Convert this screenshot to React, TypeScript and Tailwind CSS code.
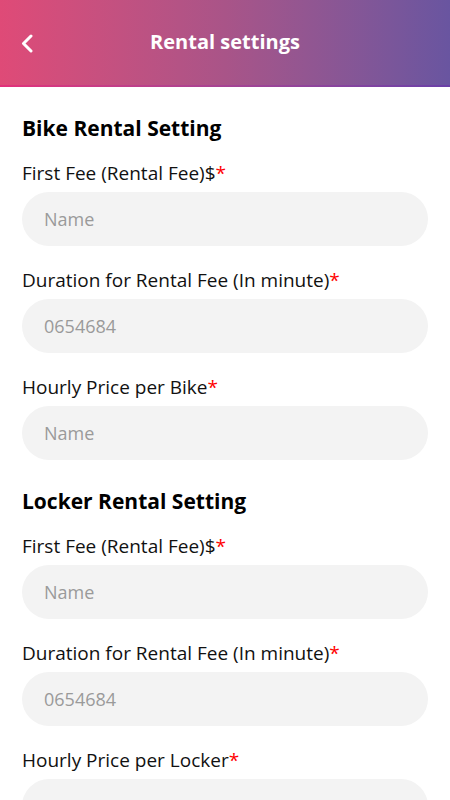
import React from "react";

const font = { fontFamily: "'Open Sans', Lato, sans-serif" };

function Field({ label, placeholder }: { label: string; placeholder: string }) {
  return (
    <div className="mb-[22px]">
      <div className="text-[19px] leading-[24px] text-[#111]">
        {label}
        <span className="text-[#ff0000]">*</span>
      </div>
      <div className="mt-[7px] h-[54px] rounded-full bg-[#f3f3f3] flex items-center px-[22px]">
        <span className="text-[18px] text-[#9a9a9a]">{placeholder}</span>
      </div>
    </div>
  );
}

export default function App() {
  return (
    <div className="w-[450px] h-[800px] overflow-hidden bg-white" style={font}>
      <div className="h-[87px] bg-gradient-to-r from-[#df4a77] via-[#a95488] to-[#6955a0] flex flex-col">
        <div className="flex-1 relative flex items-center justify-center">
          <svg
            className="absolute left-[20px] top-[34px]"
            width="14"
            height="19"
            viewBox="0 0 14 19"
            fill="none"
          >
            <path d="M11 2 L3.5 9.5 L11 17" stroke="white" strokeWidth="3" strokeLinecap="round" strokeLinejoin="round" />
          </svg>
          <span className="text-white text-[20px] font-bold mt-[-2px]">Rental settings</span>
        </div>
        <div className="h-[2px] bg-gradient-to-r from-[#e2307a] to-[#6a40a8]" />
      </div>
      <div className="px-[22px] pt-[27px]">
        <div className="text-[21px] leading-[28px] font-bold text-black mb-[19px]">Bike Rental Setting</div>
        <Field label="First Fee (Rental Fee)$" placeholder="Name" />
        <Field label="Duration for Rental Fee (In minute)" placeholder="0654684" />
        <Field label="Hourly Price per Bike" placeholder="Name" />
        <div className="text-[21px] leading-[28px] font-bold text-black mt-[27px] mb-[19px]">Locker Rental Setting</div>
        <Field label="First Fee (Rental Fee)$" placeholder="Name" />
        <Field label="Duration for Rental Fee (In minute)" placeholder="0654684" />
        <Field label="Hourly Price per Locker" placeholder="Name" />
      </div>
    </div>
  );
}
